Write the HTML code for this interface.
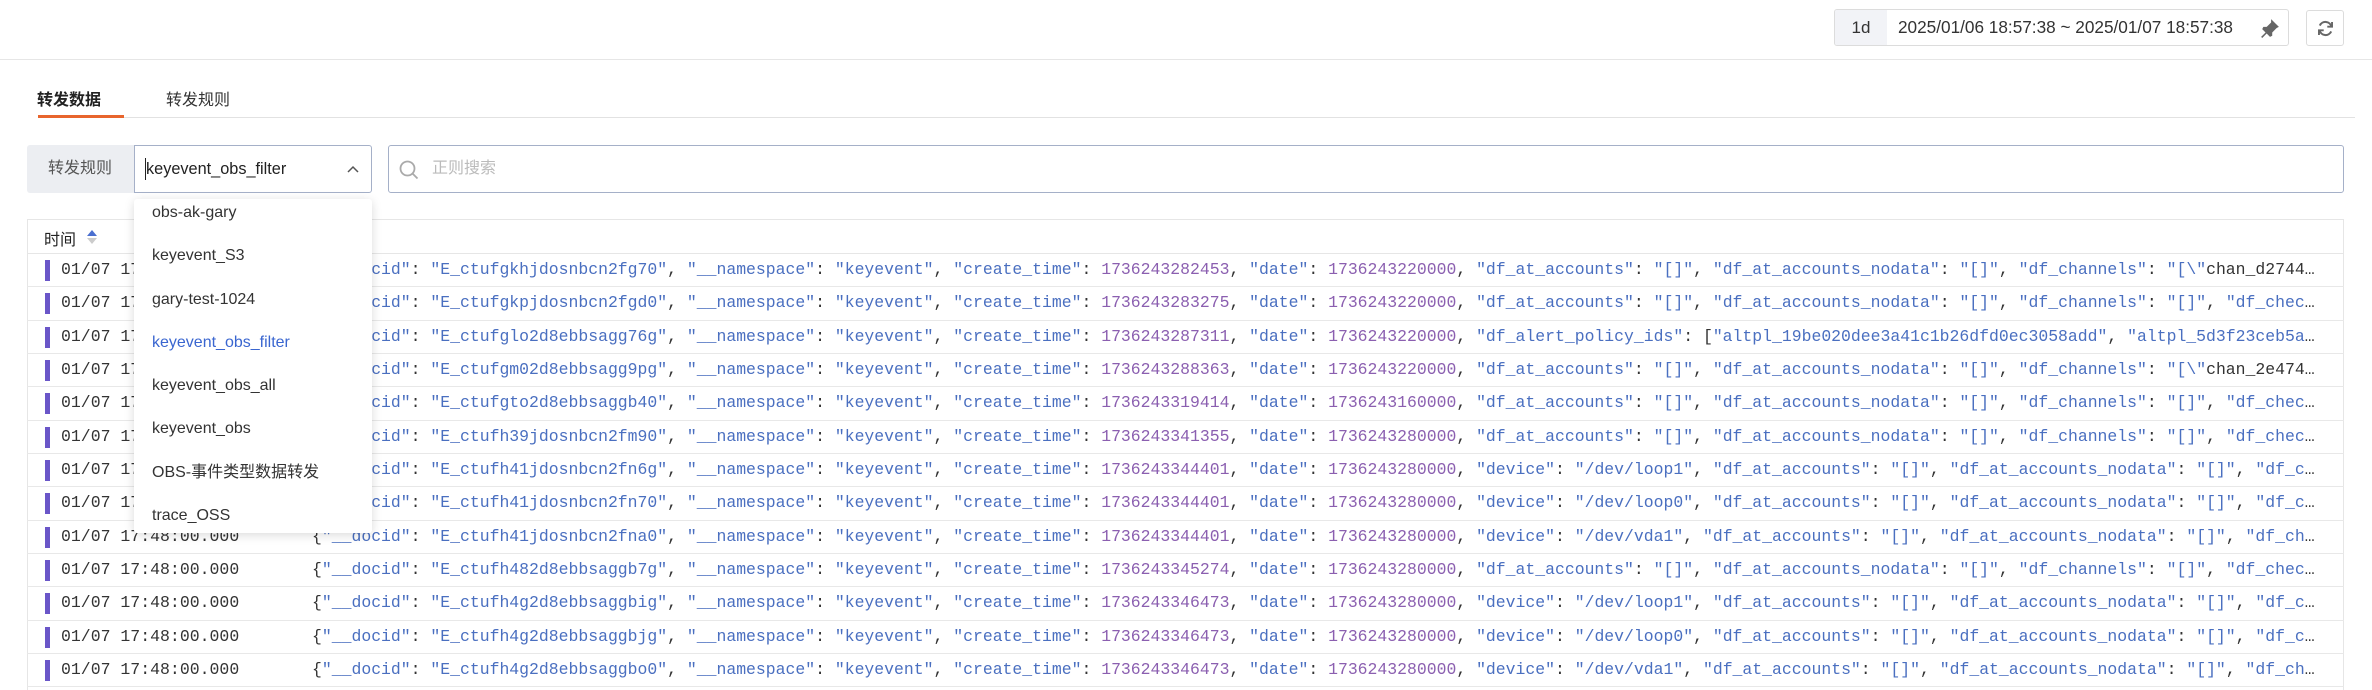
<!DOCTYPE html>
<html><head><meta charset="utf-8"><style>
*{box-sizing:border-box;margin:0;padding:0}
body{width:2372px;height:690px;overflow:hidden;background:#fff;font-family:"Liberation Sans","Noto Sans CJK SC",sans-serif;color:#333;position:relative}
.abs{position:absolute}
.mono{font-family:"Liberation Mono","DejaVu Sans Mono",monospace;font-size:16.5px}
.s{color:#4a6fc0}.n{color:#8b5fb0}
.row{position:absolute;left:27px;width:2317px;height:33.33px;border-bottom:1px solid #e8e8e8}
.bar{position:absolute;left:18px;top:6px;width:5px;height:21px;background:#6a56c8}
.t{position:absolute;left:34px;top:6px;color:#333}
.j{position:absolute;left:285px;top:6px;width:2009px;white-space:nowrap;overflow:hidden;text-overflow:ellipsis;color:#333;font-size:16.45px}
.dd div{height:43.3px;line-height:43.3px;padding-left:18px;font-size:16px;color:#333}
</style></head><body>
<div class="abs" style="left:0;top:59px;width:2372px;height:1px;background:#e6e6e6"></div>
<div class="abs" style="left:1834px;top:9px;width:455px;height:37px;border:1px solid #dcdcdc;border-radius:3px;overflow:hidden">
 <div class="abs" style="left:0;top:0;width:52px;height:35px;background:#f2f3f7;font-size:17px;line-height:35px;text-align:center;color:#333">1d</div>
 <div class="abs" style="left:63px;top:0;line-height:35px;font-size:17.2px;color:#333">2025/01/06 18:57:38 ~ 2025/01/07 18:57:38</div>
 <svg class="abs" style="left:425px;top:8px" width="20" height="20" viewBox="0 0 18 18"><path d="M10 1l7 7-2 1-4 4 0 3-2 1-3-3-4 4-1-1 4-4-3-3 1-2 3 0 4-4z" fill="#666"/></svg>
</div>
<div class="abs" style="left:2306px;top:10px;width:38px;height:36px;border:1px solid #dcdcdc;border-radius:3px">
 <svg class="abs" style="left:9px;top:8px" width="19" height="19" viewBox="0 0 16 16" fill="none" stroke="#666" stroke-width="1.7"><path d="M13 6.5A5.2 5.2 0 0 0 3.2 5.5M3 9.5a5.2 5.2 0 0 0 9.8 1"/><path d="M13.5 2.5v4h-4M2.5 13.5v-4h4" stroke-width="1.6"/></svg>
</div>
<div class="abs" style="left:37px;top:86px;font-size:16px;font-weight:bold;color:#222">转发数据</div>
<div class="abs" style="left:166px;top:86px;font-size:16px;color:#333">转发规则</div>
<div class="abs" style="left:38px;top:117px;width:2317px;height:1px;background:#e2e2e2"></div>
<div class="abs" style="left:38px;top:115px;width:86px;height:3px;background:#e8652d"></div>
<div class="abs" style="left:27px;top:145px;width:108px;height:48px;background:#eceef2;border-radius:3px 0 0 3px;font-size:16px;line-height:48px;padding-left:21px;color:#555">转发规则</div>
<div class="abs" style="left:134px;top:145px;width:238px;height:48px;border:1px solid #a5b0c8;border-radius:0 3px 3px 0;background:#fff">
 <div class="abs" style="left:10px;top:12px;width:1px;height:22px;background:#222"></div>
 <div class="abs" style="left:11px;top:0;line-height:46px;font-size:16.3px;color:#222">keyevent_obs_filter</div>
 <svg class="abs" style="left:212px;top:19px" width="12" height="8" viewBox="0 0 12 8" fill="none" stroke="#555" stroke-width="1.5"><path d="M1 7l5-5 5 5"/></svg>
</div>
<div class="abs" style="left:388px;top:145px;width:1956px;height:48px;border:1px solid #a5b0c8;border-radius:3px">
 <svg class="abs" style="left:10px;top:14px" width="20" height="20" viewBox="0 0 20 20" fill="none" stroke="#aaa" stroke-width="1.8"><circle cx="8.5" cy="8.5" r="7"/><path d="M13.5 13.5l5 5"/></svg>
 <div class="abs" style="left:43px;top:0;line-height:46px;font-size:16px;color:#bbb">正则搜索</div>
</div>
<div class="abs" style="left:27px;top:219px;width:2317px;height:471px;border:1px solid #e6e6e6;border-bottom:none"></div>
<div class="abs" style="left:27px;top:253px;width:2317px;height:1px;background:#e6e6e6"></div>
<div class="abs" style="left:44px;top:226px;font-size:16px;color:#222">时间</div>
<svg class="abs" style="left:86px;top:229px" width="12" height="16" viewBox="0 0 12 16"><path d="M6 1l5 6H1z" fill="#4a6fd0"/><path d="M6 15l5-6H1z" fill="#ccc"/></svg>

<div class="mono">
<div class="row" style="top:254px"><div class="bar"></div><div class="t">01/07 17:48:00.000</div><div class="j">{<span class="s">"__docid"</span>: <span class="s">"E_ctufgkhjdosnbcn2fg70"</span>, <span class="s">"__namespace"</span>: <span class="s">"keyevent"</span>, <span class="s">"create_time"</span>: <span class="n">1736243282453</span>, <span class="s">"date"</span>: <span class="n">1736243220000</span>, <span class="s">"df_at_accounts"</span>: <span class="s">"[]"</span>, <span class="s">"df_at_accounts_nodata"</span>: <span class="s">"[]"</span>, <span class="s">"df_channels"</span>: <span class="s">"[\"</span>chan_d2744a8c1f0e4b2d9c3a1b0f</div></div>
<div class="row" style="top:287.33px"><div class="bar"></div><div class="t">01/07 17:48:00.000</div><div class="j">{<span class="s">"__docid"</span>: <span class="s">"E_ctufgkpjdosnbcn2fgd0"</span>, <span class="s">"__namespace"</span>: <span class="s">"keyevent"</span>, <span class="s">"create_time"</span>: <span class="n">1736243283275</span>, <span class="s">"date"</span>: <span class="n">1736243220000</span>, <span class="s">"df_at_accounts"</span>: <span class="s">"[]"</span>, <span class="s">"df_at_accounts_nodata"</span>: <span class="s">"[]"</span>, <span class="s">"df_channels"</span>: <span class="s">"[]"</span>, <span class="s">"df_check_range_end"</span>: 1</div></div>
<div class="row" style="top:320.67px"><div class="bar"></div><div class="t">01/07 17:48:00.000</div><div class="j">{<span class="s">"__docid"</span>: <span class="s">"E_ctufglo2d8ebbsagg76g"</span>, <span class="s">"__namespace"</span>: <span class="s">"keyevent"</span>, <span class="s">"create_time"</span>: <span class="n">1736243287311</span>, <span class="s">"date"</span>: <span class="n">1736243220000</span>, <span class="s">"df_alert_policy_ids"</span>: [<span class="s">"altpl_19be020dee3a41c1b26dfd0ec3058add"</span>, <span class="s">"altpl_5d3f23ceb5a0c1d2e3f4"</span>]</div></div>
<div class="row" style="top:354px"><div class="bar"></div><div class="t">01/07 17:48:00.000</div><div class="j">{<span class="s">"__docid"</span>: <span class="s">"E_ctufgm02d8ebbsagg9pg"</span>, <span class="s">"__namespace"</span>: <span class="s">"keyevent"</span>, <span class="s">"create_time"</span>: <span class="n">1736243288363</span>, <span class="s">"date"</span>: <span class="n">1736243220000</span>, <span class="s">"df_at_accounts"</span>: <span class="s">"[]"</span>, <span class="s">"df_at_accounts_nodata"</span>: <span class="s">"[]"</span>, <span class="s">"df_channels"</span>: <span class="s">"[\"</span>chan_2e474b1c9d8e7f6a5b4c3d2e</div></div>
<div class="row" style="top:387.33px"><div class="bar"></div><div class="t">01/07 17:48:00.000</div><div class="j">{<span class="s">"__docid"</span>: <span class="s">"E_ctufgto2d8ebbsaggb40"</span>, <span class="s">"__namespace"</span>: <span class="s">"keyevent"</span>, <span class="s">"create_time"</span>: <span class="n">1736243319414</span>, <span class="s">"date"</span>: <span class="n">1736243160000</span>, <span class="s">"df_at_accounts"</span>: <span class="s">"[]"</span>, <span class="s">"df_at_accounts_nodata"</span>: <span class="s">"[]"</span>, <span class="s">"df_channels"</span>: <span class="s">"[]"</span>, <span class="s">"df_check_range_end"</span>: 1</div></div>
<div class="row" style="top:420.67px"><div class="bar"></div><div class="t">01/07 17:48:00.000</div><div class="j">{<span class="s">"__docid"</span>: <span class="s">"E_ctufh39jdosnbcn2fm90"</span>, <span class="s">"__namespace"</span>: <span class="s">"keyevent"</span>, <span class="s">"create_time"</span>: <span class="n">1736243341355</span>, <span class="s">"date"</span>: <span class="n">1736243280000</span>, <span class="s">"df_at_accounts"</span>: <span class="s">"[]"</span>, <span class="s">"df_at_accounts_nodata"</span>: <span class="s">"[]"</span>, <span class="s">"df_channels"</span>: <span class="s">"[]"</span>, <span class="s">"df_check_range_end"</span>: 1</div></div>
<div class="row" style="top:454px"><div class="bar"></div><div class="t">01/07 17:48:00.000</div><div class="j">{<span class="s">"__docid"</span>: <span class="s">"E_ctufh41jdosnbcn2fn6g"</span>, <span class="s">"__namespace"</span>: <span class="s">"keyevent"</span>, <span class="s">"create_time"</span>: <span class="n">1736243344401</span>, <span class="s">"date"</span>: <span class="n">1736243280000</span>, <span class="s">"device"</span>: <span class="s">"/dev/loop1"</span>, <span class="s">"df_at_accounts"</span>: <span class="s">"[]"</span>, <span class="s">"df_at_accounts_nodata"</span>: <span class="s">"[]"</span>, <span class="s">"df_channels"</span>: <span class="s">"[]"</span></div></div>
<div class="row" style="top:487.33px"><div class="bar"></div><div class="t">01/07 17:48:00.000</div><div class="j">{<span class="s">"__docid"</span>: <span class="s">"E_ctufh41jdosnbcn2fn70"</span>, <span class="s">"__namespace"</span>: <span class="s">"keyevent"</span>, <span class="s">"create_time"</span>: <span class="n">1736243344401</span>, <span class="s">"date"</span>: <span class="n">1736243280000</span>, <span class="s">"device"</span>: <span class="s">"/dev/loop0"</span>, <span class="s">"df_at_accounts"</span>: <span class="s">"[]"</span>, <span class="s">"df_at_accounts_nodata"</span>: <span class="s">"[]"</span>, <span class="s">"df_channels"</span>: <span class="s">"[]"</span></div></div>
<div class="row" style="top:520.67px"><div class="bar"></div><div class="t">01/07 17:48:00.000</div><div class="j">{<span class="s">"__docid"</span>: <span class="s">"E_ctufh41jdosnbcn2fna0"</span>, <span class="s">"__namespace"</span>: <span class="s">"keyevent"</span>, <span class="s">"create_time"</span>: <span class="n">1736243344401</span>, <span class="s">"date"</span>: <span class="n">1736243280000</span>, <span class="s">"device"</span>: <span class="s">"/dev/vda1"</span>, <span class="s">"df_at_accounts"</span>: <span class="s">"[]"</span>, <span class="s">"df_at_accounts_nodata"</span>: <span class="s">"[]"</span>, <span class="s">"df_channels"</span>: <span class="s">"[]"</span></div></div>
<div class="row" style="top:554px"><div class="bar"></div><div class="t">01/07 17:48:00.000</div><div class="j">{<span class="s">"__docid"</span>: <span class="s">"E_ctufh482d8ebbsaggb7g"</span>, <span class="s">"__namespace"</span>: <span class="s">"keyevent"</span>, <span class="s">"create_time"</span>: <span class="n">1736243345274</span>, <span class="s">"date"</span>: <span class="n">1736243280000</span>, <span class="s">"df_at_accounts"</span>: <span class="s">"[]"</span>, <span class="s">"df_at_accounts_nodata"</span>: <span class="s">"[]"</span>, <span class="s">"df_channels"</span>: <span class="s">"[]"</span>, <span class="s">"df_check_range_end"</span>: 1</div></div>
<div class="row" style="top:587.33px"><div class="bar"></div><div class="t">01/07 17:48:00.000</div><div class="j">{<span class="s">"__docid"</span>: <span class="s">"E_ctufh4g2d8ebbsaggbig"</span>, <span class="s">"__namespace"</span>: <span class="s">"keyevent"</span>, <span class="s">"create_time"</span>: <span class="n">1736243346473</span>, <span class="s">"date"</span>: <span class="n">1736243280000</span>, <span class="s">"device"</span>: <span class="s">"/dev/loop1"</span>, <span class="s">"df_at_accounts"</span>: <span class="s">"[]"</span>, <span class="s">"df_at_accounts_nodata"</span>: <span class="s">"[]"</span>, <span class="s">"df_channels"</span>: <span class="s">"[]"</span></div></div>
<div class="row" style="top:620.67px"><div class="bar"></div><div class="t">01/07 17:48:00.000</div><div class="j">{<span class="s">"__docid"</span>: <span class="s">"E_ctufh4g2d8ebbsaggbjg"</span>, <span class="s">"__namespace"</span>: <span class="s">"keyevent"</span>, <span class="s">"create_time"</span>: <span class="n">1736243346473</span>, <span class="s">"date"</span>: <span class="n">1736243280000</span>, <span class="s">"device"</span>: <span class="s">"/dev/loop0"</span>, <span class="s">"df_at_accounts"</span>: <span class="s">"[]"</span>, <span class="s">"df_at_accounts_nodata"</span>: <span class="s">"[]"</span>, <span class="s">"df_channels"</span>: <span class="s">"[]"</span></div></div>
<div class="row" style="top:654px"><div class="bar"></div><div class="t">01/07 17:48:00.000</div><div class="j">{<span class="s">"__docid"</span>: <span class="s">"E_ctufh4g2d8ebbsaggbo0"</span>, <span class="s">"__namespace"</span>: <span class="s">"keyevent"</span>, <span class="s">"create_time"</span>: <span class="n">1736243346473</span>, <span class="s">"date"</span>: <span class="n">1736243280000</span>, <span class="s">"device"</span>: <span class="s">"/dev/vda1"</span>, <span class="s">"df_at_accounts"</span>: <span class="s">"[]"</span>, <span class="s">"df_at_accounts_nodata"</span>: <span class="s">"[]"</span>, <span class="s">"df_channels"</span>: <span class="s">"[]"</span></div></div>
</div>

<div class="abs dd" style="left:134px;top:199px;width:238px;height:334px;background:#fff;border-radius:3px;box-shadow:0 2px 10px rgba(0,0,0,0.15)">
 <div style="margin-top:-8px">obs-ak-gary</div>
 <div>keyevent_S3</div>
 <div>gary-test-1024</div>
 <div style="color:#3a66d0">keyevent_obs_filter</div>
 <div>keyevent_obs_all</div>
 <div>keyevent_obs</div>
 <div>OBS-事件类型数据转发</div>
 <div>trace_OSS</div>
</div>
</body></html>
